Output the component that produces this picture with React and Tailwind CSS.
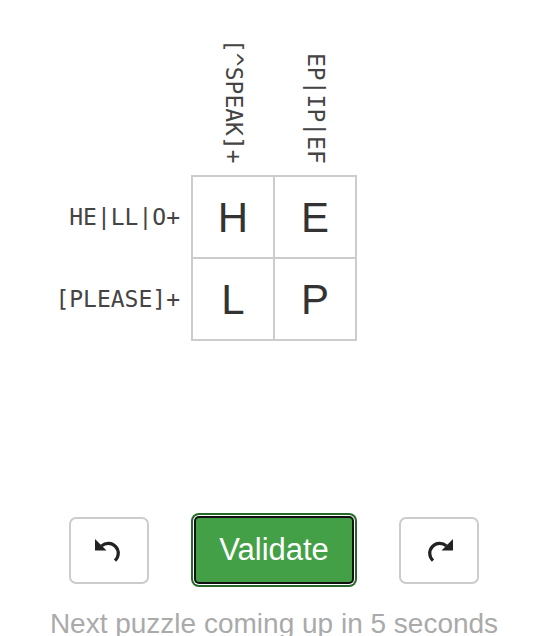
import React from "react";

const mono = { fontFamily: '"DejaVu Sans Mono", monospace' };

function UndoIcon({ flip }) {
  return (
    <svg
      width="30"
      height="26"
      viewBox="0 0 30 26"
      className={flip ? "-scale-x-100" : ""}
    >
      <path d="M1 2 L1 13.5 L12.5 13.5 Z" fill="#222" />
      <path
        d="M7.6 8.9 A9.5 9.5 0 1 1 21 23.6"
        fill="none"
        stroke="#222"
        strokeWidth="3.2"
      />
    </svg>
  );
}

export default function App() {
  const cells = ["H", "E", "L", "P"];
  return (
    <div
      className="w-[536px] h-[636px] overflow-hidden bg-white"
      style={{ fontFamily: '"Liberation Sans", Arial, sans-serif' }}
    >
      {/* column headers */}
      <div className="flex h-[175px] pl-[193px] gap-[2px] pb-[11px]">
        {["[^SPEAK]+", "EP|IP|EF"].map((t) => (
          <div key={t} className="w-[80px] flex items-end justify-center">
            <span
              className="[writing-mode:vertical-rl] text-[23px] leading-none text-[#444]"
              style={mono}
            >
              {t}
            </span>
          </div>
        ))}
      </div>
      {/* grid with row labels */}
      <div className="flex">
        <div className="w-[191px] flex flex-col gap-[2px] pt-[2px] pr-[11px]">
          {["HE|LL|O+", "[PLEASE]+"].map((t) => (
            <div
              key={t}
              className="h-[80px] flex items-center justify-end text-[23px] text-[#444]"
              style={mono}
            >
              {t}
            </div>
          ))}
        </div>
        <div className="grid grid-cols-[80px_80px] gap-[2px] p-[2px] bg-[#cccccc]">
          {cells.map((c, i) => (
            <div
              key={i}
              className="w-[80px] h-[80px] bg-white flex items-center justify-center text-[42px] text-[#333]"
            >
              {c}
            </div>
          ))}
        </div>
      </div>
      {/* buttons */}
      <div className="flex items-center pl-[69px] gap-[42px] mt-[172px]">
        <button className="w-[80px] h-[67px] rounded-[7px] border-2 border-[#cccccc] bg-white flex items-center justify-center">
          <UndoIcon />
        </button>
        <button className="w-[166px] h-[74px] rounded-[8px] bg-[#24692a] p-[2px]">
          <div className="w-full h-full rounded-[6px] bg-white p-[1px]">
            <div className="w-full h-full rounded-[5px] bg-[#111] p-[2px]">
              <div className="w-full h-full rounded-[3px] bg-[#43a047] flex items-center justify-center text-white text-[31px]">
                Validate
              </div>
            </div>
          </div>
        </button>
        <button className="w-[80px] h-[67px] rounded-[7px] border-2 border-[#cccccc] bg-white flex items-center justify-center">
          <UndoIcon flip />
        </button>
      </div>
      <div className="mt-[23px] pl-[12px] text-center text-[28px] leading-none text-[#aaaaaa]">
        Next puzzle coming up in 5 seconds
      </div>
    </div>
  );
}
